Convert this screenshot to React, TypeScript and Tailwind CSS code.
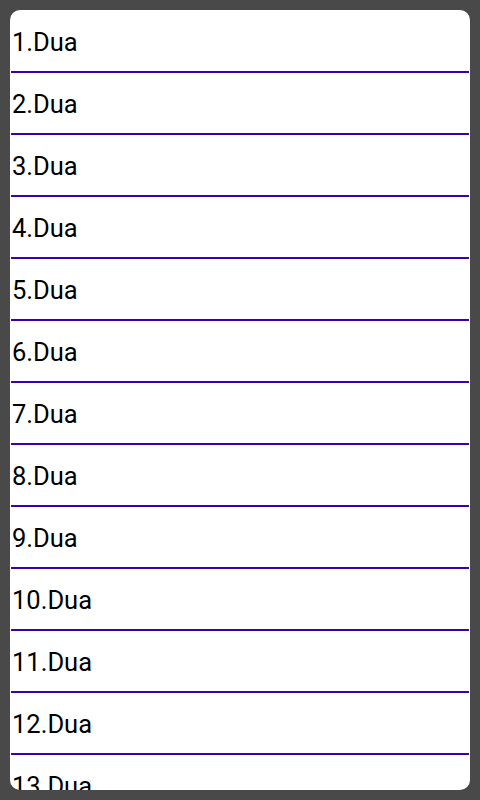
const items = Array.from({ length: 20 }, (_, i) => `${i + 1}.Dua`);

export default function App() {
  return (
    <div className="h-[800px] w-[480px] bg-[#494949] p-[10px]" style={{ fontFamily: "Roboto, sans-serif" }}>
      <div className="h-full overflow-hidden rounded-[10px] bg-white p-px">
        {items.map((item) => (
          <div
            key={item}
            className="flex h-[62px] items-center border-b-2 border-[#3700b3] pl-px pt-[2px] text-[25.5px] text-black"
          >
            {item}
          </div>
        ))}
      </div>
    </div>
  );
}
